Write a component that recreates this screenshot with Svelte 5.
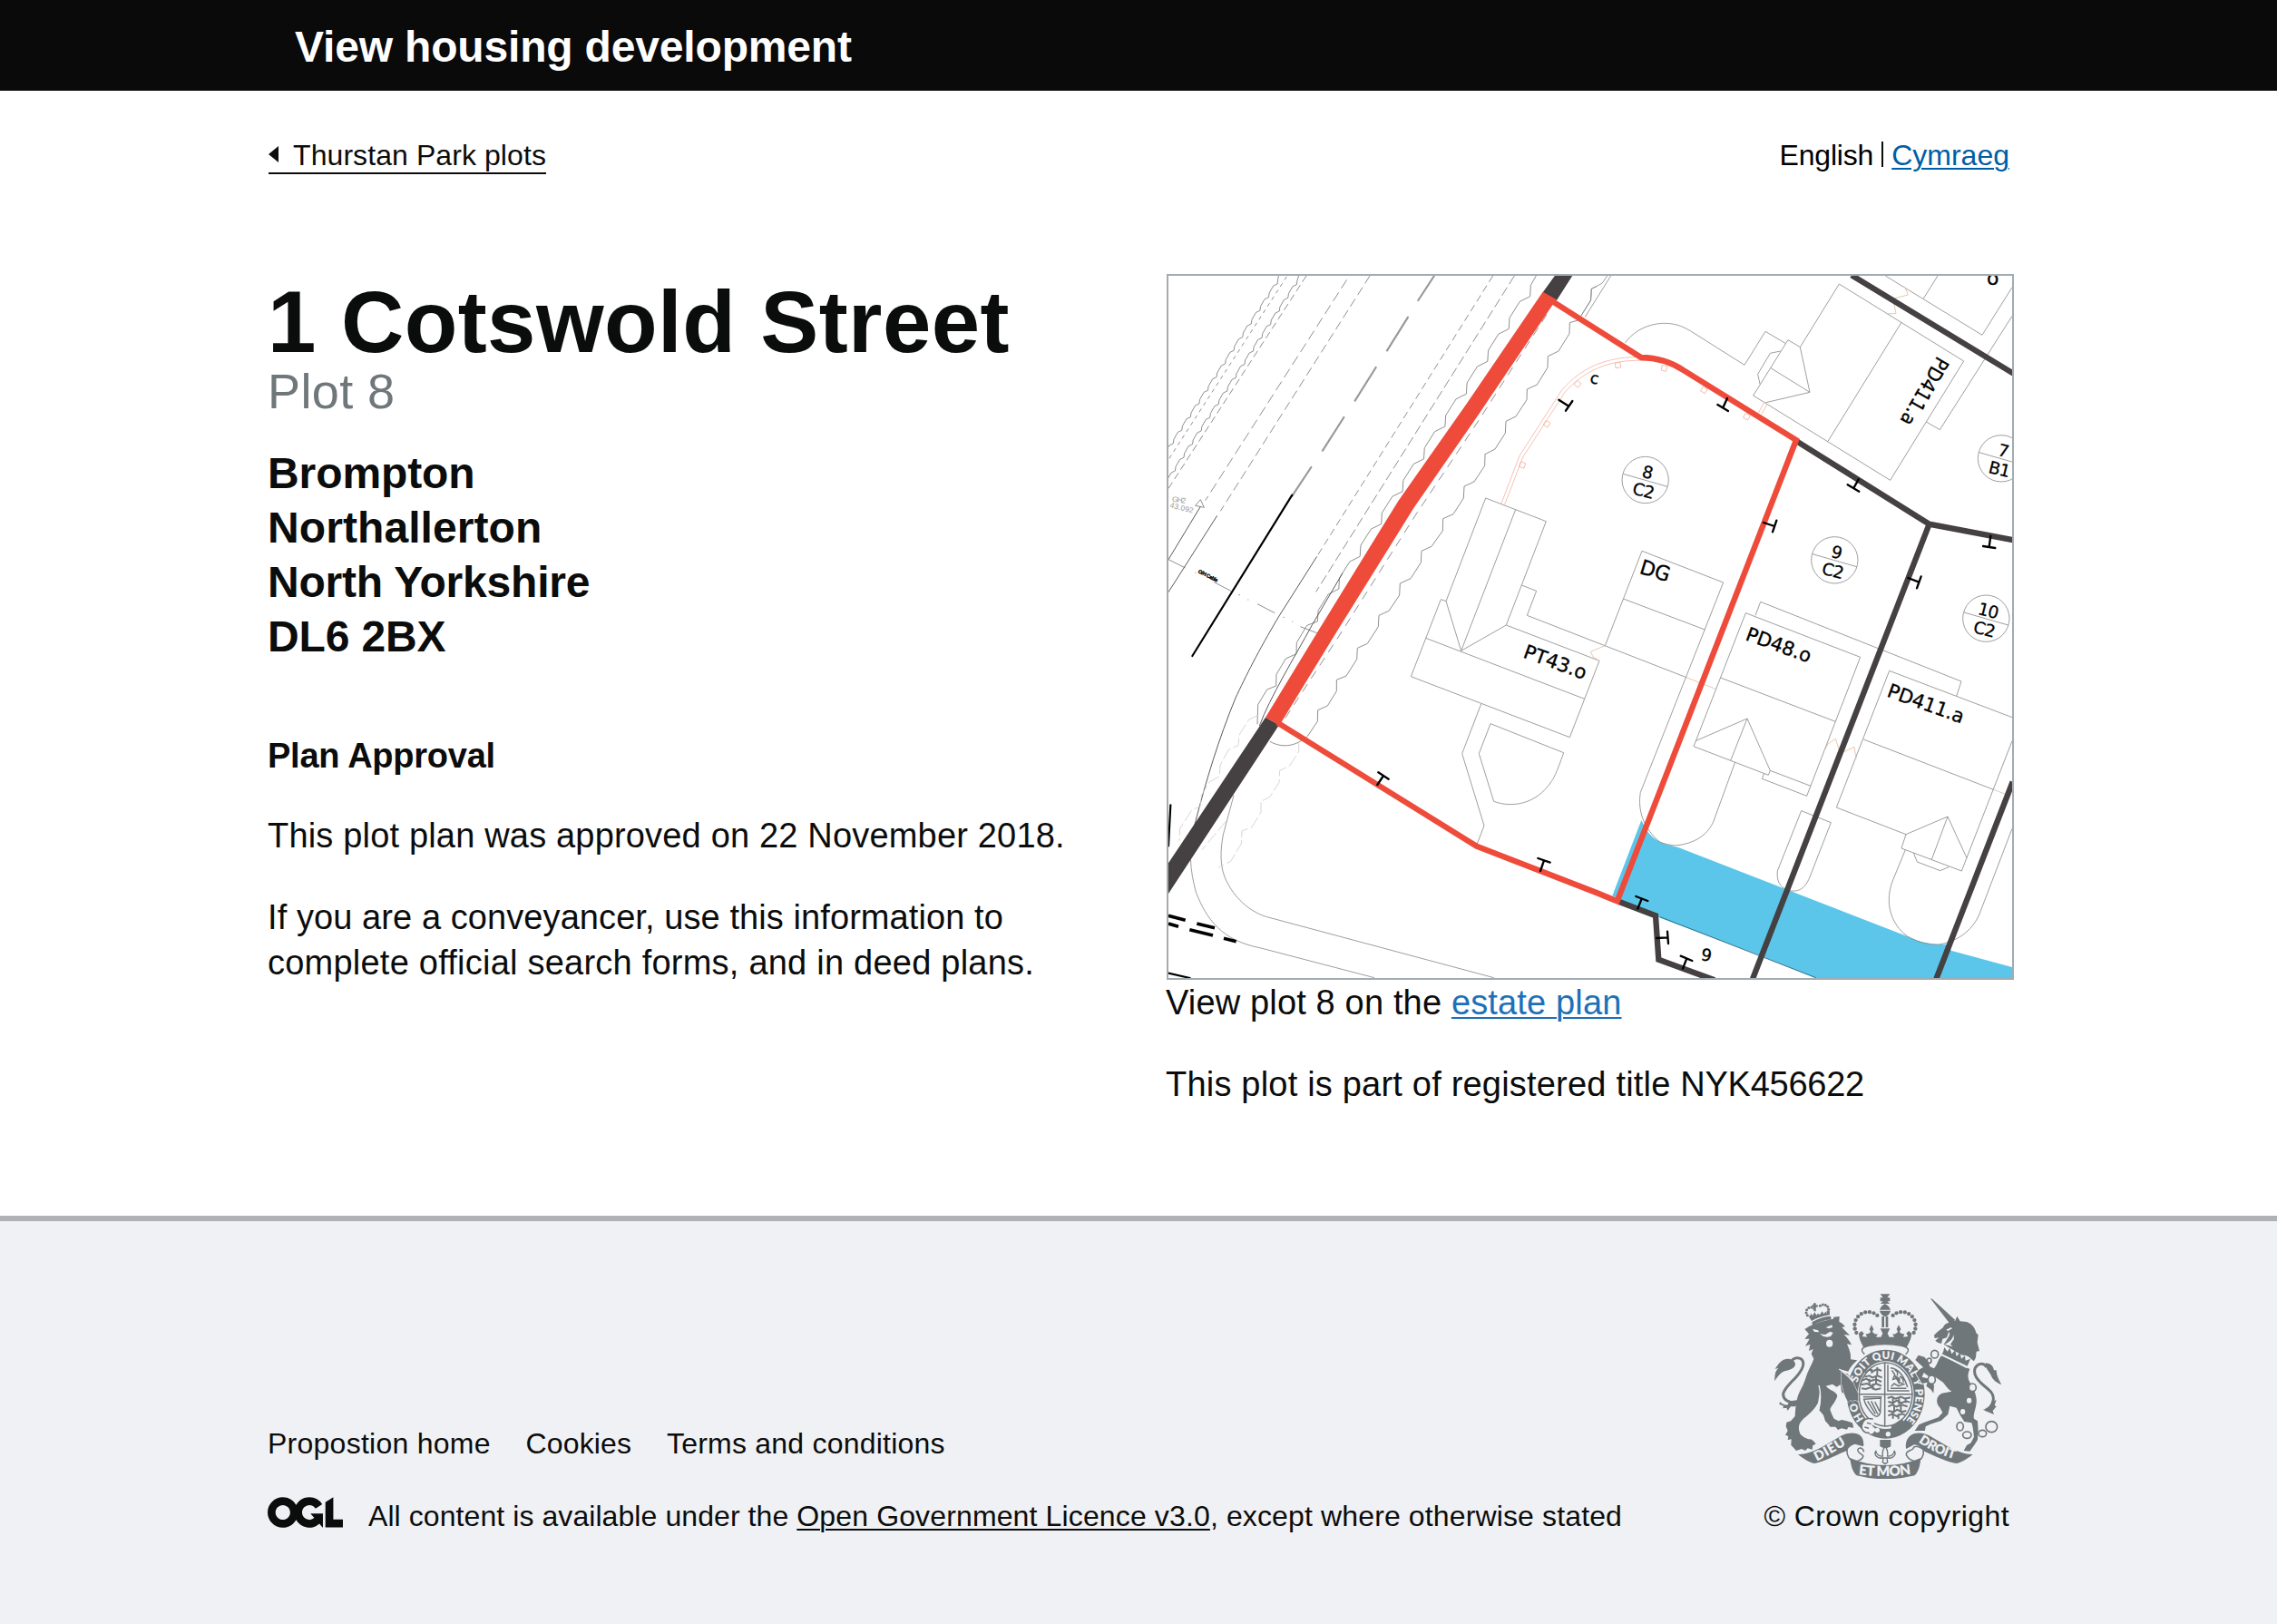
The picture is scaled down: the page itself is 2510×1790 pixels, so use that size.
<script>
  const address = [
    { text: 'Brompton', cls: 'a1' },
    { text: 'Northallerton', cls: 'a2' },
    { text: 'North Yorkshire', cls: 'a3' },
    { text: 'DL6 2BX', cls: 'a4' },
  ];

  // Builds a repeating hedge / canopy outline from a start point and the offsets of one period.
  function wave(x, y, n, steps) {
    let d = `M${x},${y}`;
    for (let i = 0; i < n; i++) for (const [dx, dy] of steps) d += `l${dx},${dy}`;
    return d;
  }
  const smallSteps = [[-2, 14], [-13, 6], [-13.7, 24]];
  const hedges = [
    wave(386, 40, 13, smallSteps) + 'M388,27l-2,13',
    wave(450, 42, 15, smallSteps) + 'M455,27l-5,15',
    'M1240,27L1222,58L1220,95' + wave(1220, 95, 10, [[-34, 17], [-34, 54], [-2.3, 36.5]]).slice(8) +
      'L482,1183L448,1240L447,1277L412,1293L381,1345L380,1383L350,1395L320,1445L318,1510',
    'M1440,62L1423,70L1421,108L1388,160L1385,172L1351,182L1350,218L1314,276L1279,293L1278,330L1243,387L1210,402L1209,437L1173,492L1140,508L1138,547L1104,600L1071,617L1070,655L1035,708L1002,723L1000,762L966,815L932,830L931,870L894,922L861,937L859,975L825,1028L790,1044L788,1083L753,1135L720,1150L718,1187L682,1243L649,1258L647,1295L612,1350L580,1363L580,1400L550,1449L518,1463L517,1500L485,1548C450,1580 405,1592 360,1567',
  ];

  const plots = [
    { x: 1601, y: 702, top: '8', bottom: 'C2' },
    { x: 2227, y: 967, top: '9', bottom: 'C2' },
    { x: 2778, y: 631, top: '7', bottom: 'B1' },
    { x: 2728, y: 1160, top: '10', bottom: 'C2' },
  ];

  const tMarks = [
    'M1315,437L1348,458M1360,441L1338,473',
    'M1872,432L1858,463M1840,453L1875,474',
    'M2306,700L2290,729M2270,718L2308,740',
    'M1992,843L2028,855M2035,836L2022,874',
    'M2743,887L2738,924M2718,921L2758,927',
    'M2470,1026L2506,1040M2513,1021L2499,1060',
    'M715,1710L735,1680M718,1669L752,1691',
    'M1254,1995L1266,1960M1246,1953L1286,1967',
    'M1576,2120L1589,2087M1570,2079L1609,2094',
    'M1638,2217L1676,2215M1674,2195L1677,2235',
    'M1725,2318L1738,2284M1718,2276L1756,2292',
  ];

  const gates = [
    { x: 1377, y: 384, r: 40 }, { x: 1275, y: 516, r: 32 }, { x: 1194, y: 652, r: 20 },
    { x: 1510, y: 322, r: -8 }, { x: 1663, y: 332, r: 14 }, { x: 1795, y: 404, r: 31 }, { x: 1936, y: 492, r: 31 },
  ];

  const labels = [
    { t: 'PD411.a', x: 2567, y: 290, r: 120, w: 250, s: 66 },
    { t: 'DG', x: 1579, y: 1010, r: 17, w: 101, s: 68 },
    { t: 'PT43.o', x: 1194, y: 1288, r: 20, w: 217, s: 64 },
    { t: 'PD48.o', x: 1929, y: 1230, r: 20, w: 225, s: 64 },
    { t: 'PD411.a', x: 2397, y: 1417, r: 20, w: 265, s: 64 },
  ];

  const dots = (cx, cy, rx, ry, from, to, n) =>
    Array.from({ length: n }, (_, i) => {
      const a = ((from + ((to - from) * i) / (n - 1)) * Math.PI) / 180;
      return { x: cx + rx * Math.cos(a), y: cy + ry * Math.sin(a) };
    });
  const crownDots = [
    ...dots(388, 153, 45, 46, 150, 312, 10),
    ...dots(500, 153, 45, 46, 30, -132, 10),
  ];
  const lionCrownDots = [...dots(199, 108, 16, 16, 140, 310, 6), ...dots(240, 99, 17, 16, 30, -130, 6)];
  const bubbles = [
    [608, 247, 12, 13], [590, 268, 7, 8], [598, 331, 12, 14], [733, 357, 12, 13], [692, 486, 11, 14],
    [715, 514, 14, 11], [766, 509, 13, 11], [796, 487, 19, 18],
  ];
</script>

<header class="bar"><span class="title">View housing development</span></header>

<main class="page">
  <div class="topline">
    <a class="back" href="#plots"><span class="tri"></span><span class="back-text">Thurstan Park plots</span></a>
    <div class="lang"><span class="en">English</span><span class="sep"></span><a href="#cy">Cymraeg</a></div>
  </div>

  <div class="columns">
    <section class="details">
      <h1>1 Cotswold Street</h1>
      <p class="plot">Plot 8</p>
      <div class="address">
        {#each address as line}<div class={line.cls}>{line.text}</div>{/each}
      </div>
      <h2>Plan Approval</h2>
      <p class="p1">This plot plan was approved on 22 November 2018.</p>
      <p class="p2"><span class="l1">If you are a conveyancer, use this information to</span><br /><span class="l2">complete official search forms, and in deed plans.</span></p>
    </section>

    <section class="plan">
      <svg class="map" viewBox="24 27 2790 2322" preserveAspectRatio="none">
        <!-- hedges and carriageway -->
        <g class="ln soft">
          {#each hedges as d}<path {d} />{/each}
          <path d="M415,30L24,635" stroke-dasharray="13 13" />
          <path d="M480,27L24,730" stroke-dasharray="24 13" />
          <path d="M614,40L146,770" stroke-dasharray="34 16" />
          <path d="M690,27L196,805" stroke-dasharray="30 15" />
          <path d="M1097,27L515,955" stroke-dasharray="24 14" />
          <path d="M1168,27L512,1072" stroke-dasharray="32 13" />
          <path d="M1275,155L1050,505L840,820L590,1215L400,1505" stroke-dasharray="30 22" />
          <path d="M24,965L80,993M175,1040L232,1070M318,1112L376,1142M460,1187L515,1208M256,1082h5M286,1098h3M403,1156h4M433,1170h3M112,1009h3" />
          <path d="M130,767L113,787L142,793Z" />
        </g>
        <g class="ln dark">
          <path d="M130,790L24,965M185,820L24,1073" />
          <path d="M515,955L388,1155C320,1270 280,1350 245,1425C190,1560 150,1690 110,1845" />
          <path d="M600,1010L500,1180C440,1290 360,1420 325,1515" />
        </g>
        <g class="ln">
          <path d="M110,1845C90,1930 95,1990 115,2065C150,2155 200,2225 330,2250L705,2348" />
          <path d="M240,1745L205,1875C190,1955 200,2005 225,2045C260,2105 310,2135 350,2147L1100,2348" />
          <path class="faint" d="M320,1480L290,1495L258,1545L255,1580L222,1595L195,1645L193,1682L160,1700L133,1745L130,1780L100,1795L62,1855L60,1895M455,1565L455,1600L425,1647L392,1663L390,1702L360,1750L330,1765L330,1800L300,1850L267,1863L265,1905L230,1963L190,1983M215,1830L135,1925" stroke-dasharray="42 10" />
        </g>
        <path class="centre grey" d="M903,27L850,108M816,164L747,274M710,330L641,440M604,495L534,605M496,660L433,755" />
        <path class="centre black" d="M433,752L103,1284" />
        <path class="verge" d="M24,2143L80,2158M118,2169L177,2183M24,2169L57,2179M94,2189L171,2208M207,2218L248,2228" />
        <path class="centre black" d="M31,1777L24,1912M24,2333L95,2349" />

        <!-- driveway and service margin -->
        <path class="water" d="M1588,1827L1602,1855C1620,1885 1645,1897 1667,1906L1710,1917L2065,2055L2490,2220C2530,2238 2590,2242 2605,2235L2612,2258L2814,2313V2350H2165L1980,2275L1650,2150L1492,2077Z" />
        <path class="ln deep" d="M1650,2147L2165,2348" />

        <!-- buildings -->
        <g class="ln">
          <path d="M1475,27L1458,52L1423,70L1420,108L1390,157M1487,27L1402,163" />
          <path d="M1535,248C1570,200 1625,183 1670,184C1710,186 1730,198 1750,209L1929,322L1998,211L2064,250" />
          <path d="M2073,239L2113,263L2242,54L2654,309L2411,703L1958,423ZM2113,263L2145,412L2000,446M2145,412L2016,332M2048,276L2014,283L1973,352L1980,385M2448,181L2205,574M2530,510L2575,536L2814,160M2395,27L2715,223L2814,65M2568,27L2521,102" />
          <path d="M1468,1250L1590,937L1859,1041L1585,1735C1575,1795 1595,1855 1650,1900C1680,1910 1690,1910 1710,1910C1780,1900 1810,1865 1825,1835L1898,1635M1528,1095L1798,1197" />
          <path d="M1073,762L1273,839L1141,1182L1449,1300L1351,1553L826,1352L925,1097L942,1103ZM942,1103L992,1267L1172,800M992,1267L1141,1182M875,1225L1400,1426M1192,1050L1241,1069L1210,1150L1737,1355" />
          <path d="M1058,1443L995,1607L1068,1845L1045,1905M1089,1508L1331,1604C1310,1665 1300,1685 1290,1700C1240,1775 1160,1787 1100,1765L1051,1607Z" />
          <path d="M1761,1583L1933,1142L2312,1288L2135,1747L1987,1690L1994,1672M1761,1583L2008,1678L2014,1663L2148,1714M1767,1565L1938,1491L2014,1663M1938,1491L1883,1630M1850,1356L2230,1501M1965,1150L1982,1105L2646,1368L2630,1417" />
          <path d="M2233,1785L2408,1333L2814,1487M2323,1560L2753,1726M2233,1785L2463,1874L2601,1815L2664,1952M2463,1874L2448,1920L2647,1995L2814,1565M2601,1815L2548,1957M2488,1935L2500,1965L2576,1994L2605,1982" />
          <path d="M2117,1796L2215,1835L2145,2015C2125,2065 2095,2065 2070,2058C2045,2045 2035,2030 2038,1995Z" />
          <path d="M2461,1925L2420,2025C2400,2075 2400,2135 2440,2185C2470,2225 2530,2240 2570,2238C2630,2230 2680,2195 2705,2140L2814,1855" />
        </g>

        <!-- fences and gates -->
        <g class="fence">
          <path d="M1125,780L1185,622L1325,405C1385,335 1470,290 1600,296M1136,783L1196,627L1335,412C1395,345 1475,302 1600,307M2005,450L1985,485M1995,445L1975,480" />
          {#each gates as g}<rect x={g.x - 8} y={g.y - 8} width="17" height="17" transform="rotate({g.r} {g.x} {g.y})" />{/each}
          <path class="tan" d="M2442,58L2460,65L2470,90L2420,103L2430,152L2400,152M1468,1250L1420,1270L1428,1287L1449,1300M1737,1355L1833,1393M2195,1595L2205,1575L2230,1558L2242,1595L2260,1600L2292,1585L2298,1625M2753,1726L2792,1741" />
        </g>

        <!-- plot boundaries -->
        <path class="bound" d="M2283,25L2818,350M2103,575L2540,848L2818,901M2540,848L1956,2352M2816,1700L2563,2352M1515,2097L1635,2143L1645,2288L1830,2356" />
        <path class="slab" d="M1303,25L1361,25L1308,108L1262,82ZM345,1487L390,1512L22,2073L22,1972Z" />
        <path class="own" d="M1295,112L1380,166L1587,297C1650,298 1690,315 1725,338L2100,570L1508,2095L1440,2067L1043,1913L385,1505" />
        <path class="ownfill" d="M1262,80L1308,106L1295,122L1050,485L835,795L583,1200L398,1502L388,1511L345,1487L520,1200L785,770L1010,450Z" />

        {#each plots as p}
          <g class="ring">
            <circle cx={p.x} cy={p.y} r="77" />
            <path d="M{p.x - 73},{p.y - 20}L{p.x + 73},{p.y + 22}" />
            <text x={p.x + 7} y={p.y - 26} transform="rotate(14 {p.x + 7} {p.y - 26})" dy="20">{p.top}</text>
            <text x={p.x - 6} y={p.y + 35} transform="rotate(14 {p.x - 6} {p.y + 35})" dy="20">{p.bottom}</text>
          </g>
        {/each}

        {#each tMarks as d}<path class="tee" {d} />{/each}

        {#each labels as l}
          <text class="lbl" x={l.x} y={l.y} font-size={l.s} textLength={l.w} lengthAdjust="spacingAndGlyphs" transform="rotate({l.r} {l.x} {l.y})">{l.t}</text>
        {/each}
        <text class="lbl" x="1416" y="381" font-size="52" transform="rotate(10 1416 381)">c</text>
        <text class="lbl" x="2730" y="57" font-size="66">o</text>
        <text class="lbl" x="1783" y="2289" font-size="55" transform="rotate(10 1783 2289)">9</text>
        <text class="tiny" x="35" y="773" font-size="25" textLength="46" transform="rotate(8 35 773)">GH2</text>
        <text class="tiny" x="28" y="793" font-size="25" textLength="79" transform="rotate(14 28 793)">43.092</text>
        <text class="cable" x="121" y="1008" font-size="17" textLength="71" transform="rotate(27 121 1008)">O/H Cable</text>
      </svg>
      <p class="cap">View plot 8 on the <a href="#estate">estate plan</a></p>
      <p class="reg">This plot is part of registered title <span class="num">NYK456622</span></p>
    </section>
  </div>
</main>

<footer>
  <div class="foot">
    <div class="left">
      <nav><a class="n1" href="#home">Propostion home</a><a class="n2" href="#cookies">Cookies</a><a class="n3" href="#terms">Terms and conditions</a></nav>
      <div class="licence">
        <svg class="ogl" viewBox="0 0 483.2 195.7" aria-label="Open Government Licence">
          <path d="M421.5 142.8V.1l-50.7 32.3v161.1h112.4v-50.7zm-122.3-9.6A47.12 47.12 0 0 1 221 97.8c0-26 21.1-47.1 47.1-47.1 16.7 0 31.4 8.7 39.7 21.8l42.7-27.2A97.63 97.63 0 0 0 268.1 0c-36.5 0-68.3 20.1-85.1 49.7A98 98 0 0 0 97.8 0C43.9 0 0 43.9 0 97.8s43.9 97.8 97.8 97.8c36.5 0 68.3-20.1 85.1-49.7a97.76 97.76 0 0 0 149.6 25.4l19.4 22.2h3v-87.8h-80l24.3 27.5zM97.8 145c-26 0-47.1-21.1-47.1-47.1s21.1-47.1 47.1-47.1 47.1 21.1 47.1 47.1S123.8 145 97.8 145" />
        </svg>
        <span class="lic"><span class="lead">All content is available under the</span> <a href="#ogl">Open Government Licence v3.0</a>, except where otherwise stated</span>
      </div>
    </div>

    <div class="crown">
      <svg class="crest" viewBox="78 47 750 613">
        <defs>
          <path id="garter" d="M352,342A99,118 0 1 1 507,473" />
          <path id="gho" d="M374,461A99,118 0 0 1 349,403" />
          <path id="rib1" d="M218,601Q270,575 322,542" />
          <path id="rib2" d="M356,645Q443,656 532,643" />
          <path id="rib3" d="M554,537Q606,575 676,595" />
        </defs>

        <!-- supporter on the left -->
        <g class="f">
          <path d="M202,141C225,128 245,122 264,121L266,132C245,134 225,140 204,151Z" />
          <path d="M186,114L194,122L199,112L204,120L211,108L217,118L222,112L228,117L236,105L241,114L248,106L251,113L260,101L261,117Q228,122 201,137Z" />
          <path d="M207,78h8v6h6v7h-6v14h-7v-14h-6v-7h5z" />
          {#each lionCrownDots as d}<circle cx={d.x} cy={d.y} r="4.500" />{/each}
          <path d="M178,164L194,154C220,142 250,133 272,131L274,124L293,122L292,140C302,144 308,150 311,156L301,158L327,184L308,182C318,192 328,204 333,216L318,213C324,226 328,238 330,250L330,264L352,267C340,278 328,290 322,304L296,297L334,331C340,348 348,362 355,378L355,402L342,398L337,405L330,398L322,407C318,395 312,390 310,380L300,372L297,347L284,355L270,346L248,352C262,368 290,372 285,388C278,408 266,416 262,430L268,446L275,460L290,468L300,464L318,468L336,474L340,490L322,488L318,496L300,492L288,497L280,487L262,487L256,478L246,468L240,448L226,432L230,405L228,372L222,408C206,440 176,455 164,472C156,485 158,498 164,512L176,522L190,528C200,526 208,532 215,544L205,548L203,562L188,558L180,566L168,560L150,566L140,555L133,548L134,528L122,530L124,518L114,514L122,500L116,486L118,472L132,468L146,452C148,420 150,390 166,362C176,344 180,330 186,312C194,292 202,280 208,262L200,246L206,230L192,236L196,214L180,220L194,196L178,196L192,180Z" />
          <path d="M78,336C80,318 78,304 92,292L80,296C90,280 100,264 120,262C132,262 146,266 147,280C146,294 128,298 112,303C98,307 90,320 78,336Z" />
          <path d="M96,404C104,412 112,416 122,414L128,402L142,400L156,398L148,420L132,420C128,426 124,430 122,434L118,424L106,426L108,418L94,412Z" />
        </g>
        <path class="s9" d="M130,275C140,258 156,255 168,264C182,280 166,304 150,322C130,344 110,360 107,378C106,396 122,408 150,408" />
        <g class="g">
          <path d="M204,163L222,168L226,174L210,173ZM248,158L268,150L270,158L258,162ZM228,180L246,182L262,172L272,176L264,188L252,190L240,188Z" />
          <ellipse cx="260" cy="211" rx="11" ry="12" />
        </g>
        <path class="w5" d="M225,350Q235,385 225,430" />

        <!-- crown -->
        <g class="f">
          <path d="M428,48h32l-9,12h9v12h-9l9,8h-32l9,-8h-9v-12h9z" />
          <path d="M443,80C452,84 460,92 462,100H426C428,92 436,84 443,80ZM426,103h36C460,112 456,118 446,122H442C434,118 428,112 426,103ZM433,122h8v36h-8zM446,122h8v36h-8z" />
          {#each crownDots as d}<circle cx={d.x} cy={d.y} r="6.500" />{/each}
          <path d="M357,178L366,170L374,178L368,188L384,190L380,180C388,180 394,178 396,172L392,164L399,150L406,164L402,172C406,178 412,182 420,180L414,190L430,190L436,178L428,162H460L452,178L458,190L474,190L468,180C476,182 482,178 486,172L482,164L489,150L496,164L492,172C494,178 500,180 508,180L504,190L520,188L514,178L522,170L532,178C530,200 520,212 516,224C470,208 418,208 372,224C368,212 358,200 357,178Z" />
        </g>
        <path class="s4" d="M376,247C360,232 368,224 390,219Q443,208 498,219C520,224 528,232 512,247" />

        <!-- garter and shield -->
        <path class="f" fill-rule="evenodd" d="M446,232A129,147 0 1 1 445.900,232ZM446,270A93,112 0 1 0 446.100,270Z" />
        <ellipse class="s4" cx="446" cy="380" rx="88" ry="105" />
        <path class="s4" d="M443,274V486M357,379H535M372,388H433M453,282V368H524" />
        <g class="s6">
          <path d="M378,308l14,-10 12,6 14,-8 14,6M368,334l14,-6 12,8 20,-6 18,8M366,360l14,2 18,-6 14,8 18,-4M400,296v14M418,290v26M392,328v20M414,322v26M404,344v20M376,322l16,-4 10,6 16,-6 16,6M364,348l20,-4 14,8 16,-8 18,8" />
          <path d="M452,392l14,-4 12,6 18,-6 14,6 18,-4M454,420l14,-6 14,6 16,-6 20,6M454,450l14,-6 14,8 18,-8 10,4M470,390v22M490,392v20M512,390v18M474,414v22M496,416v20M470,440v20M488,444v18M454,404l16,4 12,-8 16,8 14,-6 14,4M454,434l18,4 12,-8 14,8 16,-4" />
        </g>
        <g class="s4">
          <path d="M462,292Q500,296 518,356M462,360H514M466,300l10,14-6,16 14,-4 8,14 14,6-18,6-14,-8-10,10M476,300q12,2 8,18M492,320q14,6 12,20M476,318l16,10-2,14z" />
          <path d="M374,396L430,392L428,440Q420,462 404,446Q380,420 374,396ZM386,402L412,444M398,402L420,446M410,404L426,436" />
        </g>
        <path class="f" d="M464,484L500,460L510,478Q486,496 466,498Z" />
        <text class="motto" font-size="35"><textPath href="#garter" textLength="396">SOIT QUI MAL Y PENSE</textPath></text>
        <text class="motto" font-size="35"><textPath href="#gho" textLength="60">HO</textPath></text>
        <path class="g" d="M374,470L384,458C396,460 404,466 410,474L400,482L414,496L402,510C386,512 372,500 366,490Z" />
        <path class="s4" d="M404,462C384,454 368,466 366,484C366,500 380,510 392,506M384,474l14,4M376,488l14,4" />
        <circle class="g" cx="418" cy="498" r="8" /><circle class="g" cx="454" cy="511" r="8" />
        <path class="arm" d="M320,312L334,331C340,348 348,362 355,378L355,402L342,398L337,405L330,398L322,407C318,395 312,390 310,380L300,345L300,305Z" />
        <path class="w5" d="M292,296Q318,314 338,338" />

        <!-- supporter on the right -->
        <g class="f">
          <path d="M594,63L600,64L676,134L658,146Z" />
          <path d="M606,184L618,172L634,160L642,148L664,138L676,136L682,121L692,138L714,140C732,146 742,162 746,178L752,182L749,208L756,236L746,238L744,258L738,270L728,262C722,256 716,250 700,250C680,240 655,225 638,214L650,196C655,188 660,180 655,172L648,192L634,196L630,212L618,208L610,202L622,192L608,194Z" />
          <path class="edge" d="M630,252L724,296C714,318 718,334 732,350C742,374 748,390 746,408C744,430 734,446 738,460L750,468L752,500L750,530L740,546L724,568L704,566L714,548L728,540L738,520C736,500 734,485 730,474L706,470L692,448L680,424L658,418L652,446L630,466L594,478L578,486L576,500L542,500L556,480L570,474L620,456L634,440L626,424C610,410 612,384 632,376L664,370C650,362 644,350 636,340L610,322L588,320L572,308L566,322L594,330L606,350L604,376L596,364L580,352L584,340L566,344L546,310L556,298L570,290L544,266L554,250L574,256L588,272L592,288L606,294L614,282L622,264Z" />
          <path d="M776,276C790,276 802,284 804,300L812,300C812,316 820,332 829,348C812,340 800,332 794,316C788,304 776,296 776,276Z" />
          <path d="M768,430L790,424L798,404L812,398L806,416L812,420L800,434L804,446L784,438Z" />
        </g>
        <path class="s9" d="M780,290C770,274 752,276 742,292C734,312 748,332 770,350C792,368 804,378 802,396C800,412 794,424 776,432" />
        <path class="g" d="M640,226L728,272L714,294L628,248Z" />
        <path class="f" d="M636,240L640,224L650,238L658,226L664,246L676,234L680,254L692,242L696,262L708,252L710,268L726,262L716,286L632,246Z" />
        <g class="g"><ellipse cx="722" cy="400" rx="8" ry="9" /><ellipse cx="701" cy="437" rx="8" ry="9" /><path d="M646,166l16,-8 4,4-14,8zM640,214C660,206 668,196 670,182L672,196L660,214L668,222Z" /></g>
        <g class="chain">{#each bubbles as [x, y, rx, ry]}<ellipse cx={x} cy={y} {rx} {ry} />{/each}</g>

        <!-- ribbon -->
        <g class="f">
          <path d="M156,578C200,580 250,545 290,522C310,508 340,502 360,514C372,522 374,540 372,552L344,544C330,548 322,556 318,566C280,580 240,604 210,608C192,604 172,592 156,578Z" />
          <path d="M734,578C690,580 640,545 600,522C580,508 550,502 530,514C514,524 510,546 514,560L540,546C556,548 566,556 570,566C600,580 650,604 680,608C698,604 718,592 734,578Z" />
          <path d="M328,590C400,622 490,622 562,590C560,612 556,634 542,648Q443,672 350,648C336,636 330,612 328,590Z" />
        </g>
        <path class="s4" d="M318,560C316,580 324,598 344,602C356,600 368,596 372,584C366,576 350,572 354,562C360,552 372,558 374,570M372,548C360,528 340,536 330,546M570,560C574,580 566,598 546,602C532,600 520,592 514,580C512,566 530,566 536,560C540,550 550,548 570,562" />
        <path class="f" d="M427,530H463V552L445,560L427,552Z" />
        <path class="lys" d="M444,552C436,562 434,572 436,584C424,586 412,576 414,566C404,580 420,594 438,590L436,604L444,610L452,604L450,590C468,594 484,580 474,566C476,576 464,586 452,584C454,572 452,562 444,552ZM428,590H460" />
        <text class="motto" font-size="44"><textPath href="#rib1" textLength="112">DIEU</textPath></text>
        <text class="motto" font-size="46"><textPath href="#rib2" textLength="174">ET MON</textPath></text>
        <text class="motto" font-size="43"><textPath href="#rib3" textLength="132">DROIT</textPath></text>
      </svg>
      <span class="copy">© Crown copyright</span>
    </div>
  </div>
</footer>

<style>
  :global(body) { background: #fff; font-family: "Liberation Sans", Arial, sans-serif; color: #0b0c0c; }
  h1, h2, p { margin: 0; }
  a { color: inherit; }

  .bar { height: 100px; background: #0a0a0a; color: #fff; display: flex; align-items: center; padding-left: 325px; box-sizing: border-box; }
  .title { font-weight: 700; font-size: 48px; line-height: 60px; letter-spacing: -0.169px; padding-top: 4px; }

  .page { width: 1920px; margin: 0 auto; height: 1240px; padding-top: 51px; box-sizing: border-box; }
  .topline { display: flex; justify-content: space-between; align-items: flex-start; font-size: 32px; line-height: 40px; height: 151px; }
  .back { display: flex; align-items: center; gap: 16px; height: 41px; box-sizing: border-box; border-bottom: 2px solid #0b0c0c; text-decoration: none; margin-left: 1px; }
  .back-text { letter-spacing: 0.080px; line-height: 39px; padding-top: 2px; }
  .tri { border: solid transparent; border-width: 9px 11px 9px 0; border-right-color: #0b0c0c; margin-top: -1px; }
  .lang { display: flex; align-items: center; color: #000; }
  .en { letter-spacing: -0.193px; }
  .sep { width: 2px; height: 28px; background: #0b0c0c; margin: -3px 9px 0 9px; }
  .lang a { color: #005ea5; text-decoration-thickness: 2px; text-underline-offset: 3px; }

  .columns { display: grid; grid-template-columns: 991px 934px; }
  h1 { font-size: 96px; line-height: 100px; letter-spacing: 0.417px; padding-top: 3px; }
  .plot { font-size: 54px; line-height: 60px; color: #6f777b; letter-spacing: 0.389px; margin-top: -4px; }
  .address { margin-top: 31px; font-weight: 700; font-size: 48px; line-height: 60px; }
  .a1 { letter-spacing: -0.096px; }
  .a2 { letter-spacing: 0.082px; }
  .a3 { letter-spacing: -0.200px; }
  .a4 { letter-spacing: -0.146px; }
  h2 { margin-top: 76px; font-size: 38px; line-height: 50px; letter-spacing: -0.250px; }
  .p1, .p2, .cap, .reg { font-size: 38px; line-height: 50px; white-space: nowrap; }
  .p1 { margin-top: 38px; letter-spacing: 0.176px; }
  .p2 { margin-top: 40px; }
  .l1 { letter-spacing: 0.082px; }
  .l2 { letter-spacing: 0.229px; }

  .map { display: block; box-sizing: border-box; width: 934px; height: 778px; border: 2px solid #a1acb2; background: #fff; }
  .cap, .reg { margin-left: -1px; }
  .cap { letter-spacing: 0.155px; }
  .cap a { color: #1d70b8; text-decoration-thickness: 2px; text-underline-offset: 3px; }
  .reg { margin-top: 40px; letter-spacing: 0.200px; }
  .num { letter-spacing: -0.250px; }

  .ln { fill: none; stroke: #8e8e8e; stroke-width: 2.600; }
  .soft { stroke: #7d7d7d; }
  .dark { stroke: #5a5a5a; stroke-width: 3; }
  .deep { stroke: #2c6277; }
  .faint { stroke: #cfcfcf; }
  .centre { fill: none; stroke-width: 6.500; stroke-linecap: round; }
  .grey { stroke: #999; }
  .black { stroke: #000; }
  .verge { fill: none; stroke: #000; stroke-width: 11; }
  .water { fill: #5bc6ea; }
  .fence { fill: none; stroke: #f3b8a8; stroke-width: 2.600; }
  .tan { stroke: #e3bfa4; }
  .bound { fill: none; stroke: #454041; stroke-width: 19; }
  .slab { fill: #454041; }
  .own { fill: none; stroke: #ee4b3b; stroke-width: 19; }
  .ownfill { fill: #ee4b3b; }
  .ring circle, .ring path { fill: none; stroke: #8e8e8e; stroke-width: 2.600; }
  .ring text { font: 56px "DejaVu Sans", Verdana, sans-serif; text-anchor: middle; fill: #000; stroke: #000; stroke-width: 0.800; letter-spacing: -2px; }
  .tee { fill: none; stroke: #000; stroke-width: 7; stroke-linecap: round; }
  .lbl { font-family: "DejaVu Sans", Verdana, sans-serif; fill: #000; stroke: #000; stroke-width: 1; }
  .tiny { font-family: "Liberation Sans", Arial, sans-serif; fill: #999; }
  .cable { font-family: "Liberation Sans", Arial, sans-serif; font-weight: 700; fill: #000; stroke: #000; stroke-width: 1; }

  footer { border-top: 6px solid #afb1b4; background: #f0f1f4; height: 450px; box-sizing: border-box; }
  .foot { width: 1920px; height: 345px; margin: 0 auto; display: flex; justify-content: space-between; align-items: flex-end; font-size: 32px; line-height: 40px; white-space: nowrap; }
  .left { display: flex; flex-direction: column; gap: 40px; }
  nav { display: flex; }
  nav a { text-decoration: none; }
  .n1 { width: 284.500px; letter-spacing: 0.250px; }
  .n2 { width: 155.500px; letter-spacing: 0.148px; }
  .n3 { letter-spacing: 0.220px; }
  .licence { display: flex; align-items: center; }
  .ogl { width: 83px; height: 34px; fill: #0b0c0c; margin: -8px 28px 0 0; }
  .lic { letter-spacing: 0.133px; }
  .lead { letter-spacing: 0.075px; }
  .lic a { text-decoration-thickness: 2px; text-underline-offset: 3px; }
  .crown { display: flex; flex-direction: column; align-items: flex-end; gap: 21px; }
  .crest { width: 250px; height: 204.300px; margin-right: 9px; display: block; }
  .copy { letter-spacing: 0.400px; }

  .f { fill: #6f777b; }
  .g { fill: #f0f1f4; }
  .s9 { fill: none; stroke: #6f777b; stroke-width: 9; }
  .s4, .lys { fill: none; stroke: #6f777b; stroke-width: 4.500; }
  .s6 { fill: none; stroke: #6f777b; stroke-width: 6; }
  .lys { fill: #f0f1f4; stroke-width: 4; }
  .w5 { fill: none; stroke: #f0f1f4; stroke-width: 4; }
  .arm { fill: #6f777b; stroke: #f0f1f4; stroke-width: 3; paint-order: stroke; }
  .edge { stroke: #f0f1f4; stroke-width: 5; paint-order: stroke; }
  .chain { fill: #f0f1f4; stroke: #6f777b; stroke-width: 5; }
  .motto { font-family: Lato, "Open Sans", sans-serif; font-weight: 800; fill: #f0f1f4; }
</style>
